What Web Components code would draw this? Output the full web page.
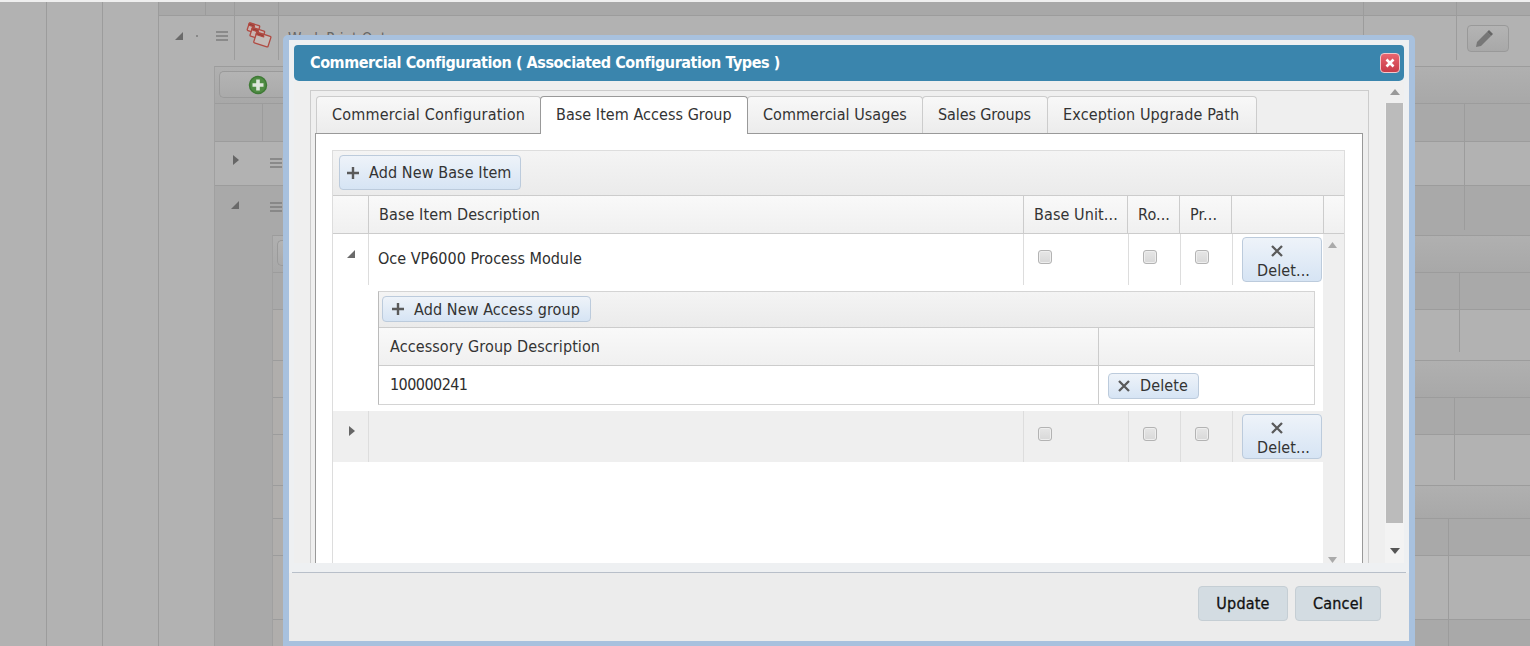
<!DOCTYPE html>
<html>
<head>
<meta charset="utf-8">
<title>Commercial Configuration</title>
<style>
    html, body { margin: 0; height: 646px; overflow: hidden; background: #b2b2b2; }
    body { position: relative; font-family: "DejaVu Sans", "Noto Sans", sans-serif; font-stretch: condensed; font-size: 16px; color: #2e2e2e; }
</style>
</head>
<body>
<app-backdrop></app-backdrop>

<app-dialog heading="Commercial Configuration ( Associated Configuration Types )">
    <app-tabs active="1" labels="Commercial Configuration|Base Item Access Group|Commercial Usages|Sales Groups|Exception Upgrade Path" widths="225 208 176 126 210" spacing=".2 .05 .05 -.1 .15">
        <app-grid>
            <app-button slot="toolbar" icon="plus" size="big">Add New Base Item</app-button>
            <app-grid-row kind="head" cols="36 655 104 52 52 92 20">
                <span></span><span>Base Item Description</span><span>Base Unit...</span><span>Ro...</span><span>Pr...</span><span></span><span></span>
            </app-grid-row>
            <app-scrollbox slot="body">
                <app-base-row open>Oce VP6000 Process Module</app-base-row>
                <app-detail>
                    <app-button slot="toolbar" icon="plus" size="small">Add New Access group</app-button>
                    <span slot="head">Accessory Group Description</span>
                    <span slot="value">100000241</span>
                    <app-button slot="action" icon="x" size="small">Delete</app-button>
                </app-detail>
                <app-base-row alt></app-base-row>
            </app-scrollbox>
        </app-grid>
    </app-tabs>
</app-dialog>

<script>
const ICONS = {
    plus: '<svg width="12" height="12" viewBox="0 0 12 12"><path d="M6 0v12M0 6h12" stroke="#5a5a5a" stroke-width="2.4"/></svg>',
    x: '<svg width="12" height="12" viewBox="0 0 12 12"><path d="M1 1l10 10M11 1L1 11" stroke="#5a5a5a" stroke-width="2.3"/></svg>',
    corner: '<svg width="8" height="8" viewBox="0 0 8 8"><path d="M8 0v8H0z" fill="#6a6a6a"/></svg>',
    right: '<svg width="6" height="10" viewBox="0 0 6 10"><path d="M0 0l6 5-6 5z" fill="#666"/></svg>',
    burger: '<svg width="12" height="10" viewBox="0 0 12 10"><path d="M0 1h12M0 5h12M0 9h12" stroke="#7d7d7d" stroke-width="1.6"/></svg>'
};

function shadow(el, html) {
    el.attachShadow({mode: 'open'}).innerHTML = html;
}

const LINE = '#9c9c9c';

function vline(x, height) {
    const size = height ? '1px ' + height + 'px' : '1px 100%';
    return `linear-gradient(${LINE},${LINE}) ${x}px 0/${size} no-repeat`;
}

// one horizontal stripe of the page behind the dialog
function band(height, fill, extras, content) {
    const layers = (extras || []).concat(fill).join(',');
    return `<div class="band" style="height:${height}px;background:${layers}">${content || ''}</div>`;
}

const FLAT = '#b2b2b2';
const DARK = '#a9a9a9';
const GRAD = 'linear-gradient(#b0b0b0,#a8a8a8)';
const SLIVER = 'linear-gradient(#b0aeac,#b0aeac) 0 0/11px 100% no-repeat';

class AppBackdrop extends HTMLElement {
    constructor() {
        super();
        const panelB = [
            band(36, GRAD, [], '<i class="ghost" style="width:30px;height:26px;margin:4px 0 0 4px"></i>'),
            band(36, DARK, [vline(1186)]),
            band(50, FLAT, [SLIVER, vline(1186, 42)]),
            band(36, GRAD, [SLIVER]),
            band(36, DARK, [SLIVER, vline(1181)]),
            band(50, FLAT, [SLIVER, vline(1181, 45)]),
            band(32, GRAD, [SLIVER]),
            band(36, DARK, [SLIVER, vline(1175)]),
            band(63, FLAT, [SLIVER, vline(1175)]),
            band(28, DARK, [SLIVER, vline(1175)])
        ].join('');
        const panelA = [
            band(36, GRAD, [], `<i class="ghost add" style="height:27px;margin:4px 0 0 4px"><svg width="20" height="20" viewBox="0 0 20 20"><circle cx="10" cy="10" r="8.5" fill="#4f8c43" stroke="#3f7a36" stroke-width="1.5"/><path d="M10 4.500v11M4.500 10h11" stroke="#dfe6dc" stroke-width="3.6"/></svg></i>`),
            band(37, DARK, [vline(47), vline(1249)]),
            band(43, FLAT, [vline(1249)], `<div class="cells"><span style="margin:13px 0 0 18px">${ICONS.right}</span><span style="margin:16px 0 0 31px">${ICONS.burger}</span></div>`),
            `<div class="nest" style="background:${vline(1249, 44)},${DARK}">
                <div class="cells" style="height:49px"><span style="margin:15px 0 0 16px">${ICONS.corner}</span><span style="margin:16px 0 0 31px">${ICONS.burger}</span></div>
                <div class="panel b">${panelB}</div>
            </div>`
        ].join('');
        shadow(this, `
    <style>
    :host { display: grid; grid-template-columns: 47px 56px 56px 1fr; height: 644px; border-top: 2px solid #efefef; overflow: hidden; }
    .col { border-right: 1px solid ${LINE}; }
    .col, .main { background: ${FLAT}; box-sizing: border-box; }
    .top, .row { display: grid; grid-template-columns: 47px 29px 44px 1085px 93px 1fr; }
    .top { height: 13px; background: #a8a8a8; border-bottom: 1px solid ${LINE}; }
    .top i { border-right: 1px solid ${LINE}; }
    .row { height: 50px; }
    .row > div { height: 44px; border-right: 1px solid ${LINE}; box-sizing: border-box; }
    .row > div:last-child { border: 0; }
    .row .wide { grid-column: span 2; display: flex; align-items: center; padding: 0 0 4px 16px; gap: 10px; }
    .row .icon { display: flex; padding: 5px 0 0 10px; }
    .row .name { padding: 14px 0 0 9px; font-size: 15px; color: #666; overflow: hidden; }
    .pencil { display: flex; align-items: center; justify-content: center; box-sizing: border-box; width: 42px; height: 27px; margin: 9px 0 0 10px; padding-right: 8px; border: 1px solid #999; border-radius: 4px; background: linear-gradient(#b4b4b4,#a8a8a8); }
    .panel { border-left: 1px solid #a0a0a0; border-top: 1px solid ${LINE}; }
    .panel.a { margin-left: 55px; }
    .panel.b { margin: 0 0 0 57px; }
    .nest { height: 461px; overflow: hidden; }
    .band { display: flow-root; border-bottom: 1px solid ${LINE}; }
    .cells { display: flex; align-items: flex-start; }
    .cells span { display: block; line-height: 0; }
    .ghost { display: flex; align-items: center; box-sizing: border-box; border: 1px solid #9a9a9a; border-right: 0; border-radius: 5px 0 0 5px; background: linear-gradient(#b4b4b4,#aaa); }
    .ghost.add { width: 200px; padding-left: 28px; }
    .dot { width: 2px; height: 2px; background: #888; }
    </style>
    <div class="col"></div><div class="col"></div><div class="col"></div>
    <div class="main">
        <div class="top"><i></i><i></i><i></i><i></i><i></i><b></b></div>
        <div class="row">
            <div class="wide">
                <span style="line-height:0">${ICONS.corner}</span>
                <span class="dot" style="margin-left:3px"></span>
                <span style="line-height:0;margin-left:8px">${ICONS.burger}</span>
            </div>
            <div class="icon">
                <svg width="28" height="28" viewBox="0 0 28 28" stroke="#b04a42" stroke-width="1.3" stroke-linejoin="round">
                    <g transform="rotate(18 8 7)"><rect x="3" y="3" width="11" height="8" rx="1" fill="#c9b4b1"/><path d="M3 3.500h5l1 2H3z" fill="#8a3a34"/></g>
                    <g transform="rotate(18 12 12)"><rect x="6" y="8" width="13" height="9" rx="1" fill="#c9b4b1"/><path d="M6 8.500h6l1 2H6z" fill="#8a3a34"/></g>
                    <g transform="rotate(18 17 18)"><rect x="10" y="13" width="15" height="11" rx="1" fill="#c4bcb9"/><path d="M10 13.500h7l1 2h-8z" fill="#8a3a34"/></g>
                </svg>
            </div>
            <div class="name">Work Print Out</div>
            <div></div>
            <div><span class="pencil"><svg width="20" height="20" viewBox="0 0 20 20"><path d="M2 18l1-5L13 3l4 4L7 17z" fill="#777"/><path d="M13 3l2-2 4 4-2 2z" fill="#666"/></svg></span></div>
        </div>
        <div class="panel a">${panelA}</div>
    </div>
`);
    }
}
customElements.define('app-backdrop', AppBackdrop);

class AppDialog extends HTMLElement {
    constructor() {
        super();
        shadow(this, `
    <style>
    :host { position: absolute; left: 283px; top: 35px; box-sizing: border-box; width: 1132px; height: 611px; display: flex; flex-direction: column; border: solid #a8c1de; border-width: 5px 6px; border-radius: 5px 5px 0 0; background: #eef0f2; }
    .title { display: flex; align-items: center; justify-content: space-between; height: 36px; margin: 5px 5px 0; padding: 0 4px 0 16px; border-radius: 4px 4px 5px 5px; background: #3a85ad; color: #fff; font-weight: bold; font-size: 16px; letter-spacing: -.43px; }
    .title span:first-child { padding-bottom: 2px; }
    .close { display: flex; align-items: center; justify-content: center; box-sizing: border-box; width: 20px; height: 20px; margin-bottom: 1px; border: 1px solid #f0c8cc; border-radius: 4px; background: linear-gradient(#e9656f,#c73c49); }
    .scroll { display: flex; height: 482px; margin: 0 5px; overflow: hidden; background: #efefef; }
    .content { flex: 1; padding: 9px 0 0 16px; overflow: hidden; }
    .bar { width: 19px; display: flex; flex-direction: column; align-items: center; background: #f3f3f3; }
    .bar .up { flex: none; height: 22px; display: flex; align-items: center; justify-content: center; width: 100%; background: #efefef; }
    .bar .thumb { flex: none; width: 17px; height: 420px; background: #bbb; }
    .bar .down { flex: none; height: 6px; margin-top: 25px; line-height: 0; }
    .rule { height: 9px; margin: 0 3px; border-bottom: 1px solid #b8bfc9; }
    .foot { display: flex; justify-content: flex-end; gap: 7px; height: 68px; box-sizing: border-box; padding: 13px 28px 0 0; background: #ececec; }
    button { box-sizing: border-box; height: 35px; border: 1px solid #c5ced4; border-radius: 4px; background: #d3dce2; font: inherit; font-size: 16px; letter-spacing: .2px; color: #111; -webkit-text-stroke: .3px #111; padding: 0; }
    </style>
    <div class="title">
        <span>${this.getAttribute('heading')}</span>
        <span class="close"><svg width="10" height="10" viewBox="0 0 10 10"><path d="M1.500 1.500l7 7M8.500 1.500l-7 7" stroke="#fff" stroke-width="2.6"/></svg></span>
    </div>
    <div class="scroll">
        <div class="content"><slot></slot></div>
        <div class="bar">
            <div class="up"><svg width="10" height="6"><path d="M5 0l5 6H0z" fill="#999"/></svg></div>
            <div class="thumb"></div>
            <div class="down"><svg width="10" height="6"><path d="M0 0h10L5 6z" fill="#555"/></svg></div>
        </div>
    </div>
    <div class="rule"></div>
    <div class="foot">
        <button style="width:90px">Update</button>
        <button style="width:86px">Cancel</button>
    </div>
`);
    }
}
customElements.define('app-dialog', AppDialog);

class AppTabs extends HTMLElement {
    constructor() {
        super();
        const active = Number(this.getAttribute('active'));
        const widths = this.getAttribute('widths').split(' ');
        const spacing = this.getAttribute('spacing').split(' ');
        const tabs = this.getAttribute('labels').split('|').map((label, i) =>
            `<div class="tab${i === active ? ' on' : ''}" style="width:${widths[i]}px;letter-spacing:${spacing[i]}px">${label}</div>`).join('');
        shadow(this, `
    <style>
    :host { display: block; box-sizing: border-box; width: 1059px; height: 560px; padding: 5px 5px 0 4px; border: 1px solid #ccc; border-bottom: 0; overflow: hidden; }
    .strip { display: flex; height: 37px; padding-left: 1px; align-items: flex-end; }
    .tab { flex: none; box-sizing: border-box; height: 37px; line-height: 35px; padding-left: 15px; margin-right: -1px; border: 1px solid #ccc; border-bottom: 0; border-radius: 4px 4px 0 0; background: linear-gradient(#f8f8f8,#ececec); color: #333; white-space: nowrap; }
    .tab.on { position: relative; height: 38px; margin-bottom: -1px; border-color: #999; background: #fff; z-index: 1; line-height: 35px; }
    .page { box-sizing: border-box; height: 500px; padding: 16px 16px 0; border: 1px solid #999; background: #fff; }
    </style>
    <div class="strip">${tabs}</div>
    <div class="page"><slot></slot></div>
`);
    }
}
customElements.define('app-tabs', AppTabs);

class AppButton extends HTMLElement {
    constructor() {
        super();
        const icon = ICONS[this.getAttribute('icon')];
        shadow(this, `
    <style>
    :host { display: inline-flex; box-sizing: border-box; align-items: center; gap: 10px; padding: 0 10px; border: 1px solid #bccbdc; border-radius: 4px; background: linear-gradient(#eef3f9,#d6e4f4); color: #333; white-space: nowrap; letter-spacing: .1px; }
    :host([size=big]) { height: 35px; padding: 0 9px 0 7px; }
    :host([size=small]) { height: 26px; padding: 0 10px 0 9px; }
    :host([size=stack]) { display: block; width: 80px; height: 45px; padding: 7px 0 0; text-align: center; line-height: 19px; }
    svg { display: block; flex: none; }
    :host([size=stack]) svg { margin: 0 auto 4px 28px; }
    :host([size=stack]) span { display: block; padding-left: 3px; }
    </style>
    ${icon}<span><slot></slot></span>
`);
    }
}
customElements.define('app-button', AppButton);

class AppGrid extends HTMLElement {
    constructor() {
        super();
        shadow(this, `
    <style>
    :host { display: block; box-sizing: border-box; width: 1013px; height: 470px; border: 1px solid #ddd; border-bottom: 0; }
    .bar { height: 40px; padding: 4px 0 0 6px; display: flex; align-items: flex-start; border-bottom: 1px solid #ccc; background: linear-gradient(#f4f4f4,#ebebeb); }
    </style>
    <div class="bar"><slot name="toolbar"></slot></div>
    <slot></slot>
    <slot name="body"></slot>
`);
    }
}
customElements.define('app-grid', AppGrid);

class AppGridRow extends HTMLElement {
    constructor() {
        super();
        const cols = this.getAttribute('cols').split(' ').map((w) => w + 'px').join(' ');
        shadow(this, `
    <style>
    :host { display: grid; grid-template-columns: ${cols}; height: 37px; border-bottom: 1px solid #ccc; background: linear-gradient(#f9f9f9,#f0f0f0); line-height: 38px; color: #333; letter-spacing: .1px; }
    ::slotted(span) { box-sizing: border-box; padding-left: 10px; border-right: 1px solid #ccc; white-space: nowrap; overflow: hidden; }
    ::slotted(span:last-child) { border: 0; }
    </style>
    <slot></slot>
`);
    }
}
customElements.define('app-grid-row', AppGridRow);

class AppScrollbox extends HTMLElement {
    constructor() {
        super();
        shadow(this, `
    <style>
    :host { display: flex; height: 400px; }
    .rows { width: 990px; flex: none; }
    .bar { flex: 1; background: #efefef; display: flex; flex-direction: column; align-items: center; padding: 8px 2px 0 0; }
    .bar svg { flex: none; }
    .bar svg:last-child { margin-top: 309px; }
    </style>
    <div class="rows"><slot></slot></div>
    <div class="bar">
        <svg width="9" height="6"><path d="M4.500 0L9 6H0z" fill="#aaa"/></svg>
        <svg width="9" height="6"><path d="M0 0h9L4.500 6z" fill="#aaa"/></svg>
    </div>
`);
    }
}
customElements.define('app-scrollbox', AppScrollbox);

class AppCheck extends HTMLElement {
    constructor() {
        super();
        shadow(this, `
    <style>
    :host { display: block; box-sizing: border-box; width: 14px; height: 14px; border: 1px solid #b3b3b3; border-radius: 3px; background: linear-gradient(#e6e6e6,#d8d8d8); box-shadow: inset 0 0 0 1px #eee; }
    </style>
`);
    }
}
customElements.define('app-check', AppCheck);

class AppBaseRow extends HTMLElement {
    constructor() {
        super();
        const open = this.hasAttribute('open');
        const check = '<div class="c chk"><app-check></app-check></div>';
        shadow(this, `
    <style>
    :host { display: grid; grid-template-columns: 36px 655px 105px 52px 52px 90px; height: 51px; background: #fff; color: #2e2e2e; }
    :host([alt]) { background: #efefef; }
    .c { box-sizing: border-box; border-right: 1px solid #ddd; }
    .c:last-child { border: 0; padding: 3px 0 0 9px; }
    .tog { display: flex; padding: ${open ? '16px 0 0 14px' : '15px 0 0 16px'}; align-items: flex-start; }
    .name { padding: 14px 0 0 9px; line-height: 22px; white-space: nowrap; }
    .chk { padding: 16px 0 0 14px; }
    svg { display: block; }
    </style>
    <div class="c tog">${open ? ICONS.corner : ICONS.right}</div>
    <div class="c name"><slot></slot></div>
    ${check}${check}${check}
    <div class="c"><app-button icon="x" size="stack">Delet...</app-button></div>
`);
    }
}
customElements.define('app-base-row', AppBaseRow);

class AppDetail extends HTMLElement {
    constructor() {
        super();
        shadow(this, `
    <style>
    :host { display: block; box-sizing: border-box; height: 126px; padding: 6px 8px 6px 45px; background: #fff; }
    .box { box-sizing: border-box; width: 937px; height: 114px; border: 1px solid #d4d4d4; border-left-color: #bbb; }
    .bar { height: 35px; padding-left: 3px; display: flex; align-items: flex-start; border-bottom: 1px solid #ccc; background: linear-gradient(#f4f4f4,#ebebeb); }
    .bar ::slotted(*) { margin-top: 4px; }
    .head, .row { display: grid; grid-template-columns: 720px 1fr; }
    .head { height: 37px; line-height: 38px; border-bottom: 1px solid #ccc; background: linear-gradient(#f9f9f9,#f0f0f0); color: #333; letter-spacing: .1px; }
    .row { height: 38px; line-height: 38px; }
    .head > div, .row > div { box-sizing: border-box; }
    .head > div:first-child, .row > div:first-child { padding-left: 11px; border-right: 1px solid #ccc; }
    .row > div:first-child { letter-spacing: -.55px; }
    .row > div:last-child { padding: 7px 0 0 9px; line-height: 0; }
    </style>
    <div class="box">
        <div class="bar"><slot name="toolbar"></slot></div>
        <div class="head"><div><slot name="head"></slot></div><div></div></div>
        <div class="row"><div><slot name="value"></slot></div><div><slot name="action"></slot></div></div>
    </div>
`);
    }
}
customElements.define('app-detail', AppDetail);
</script>
</body>
</html>
